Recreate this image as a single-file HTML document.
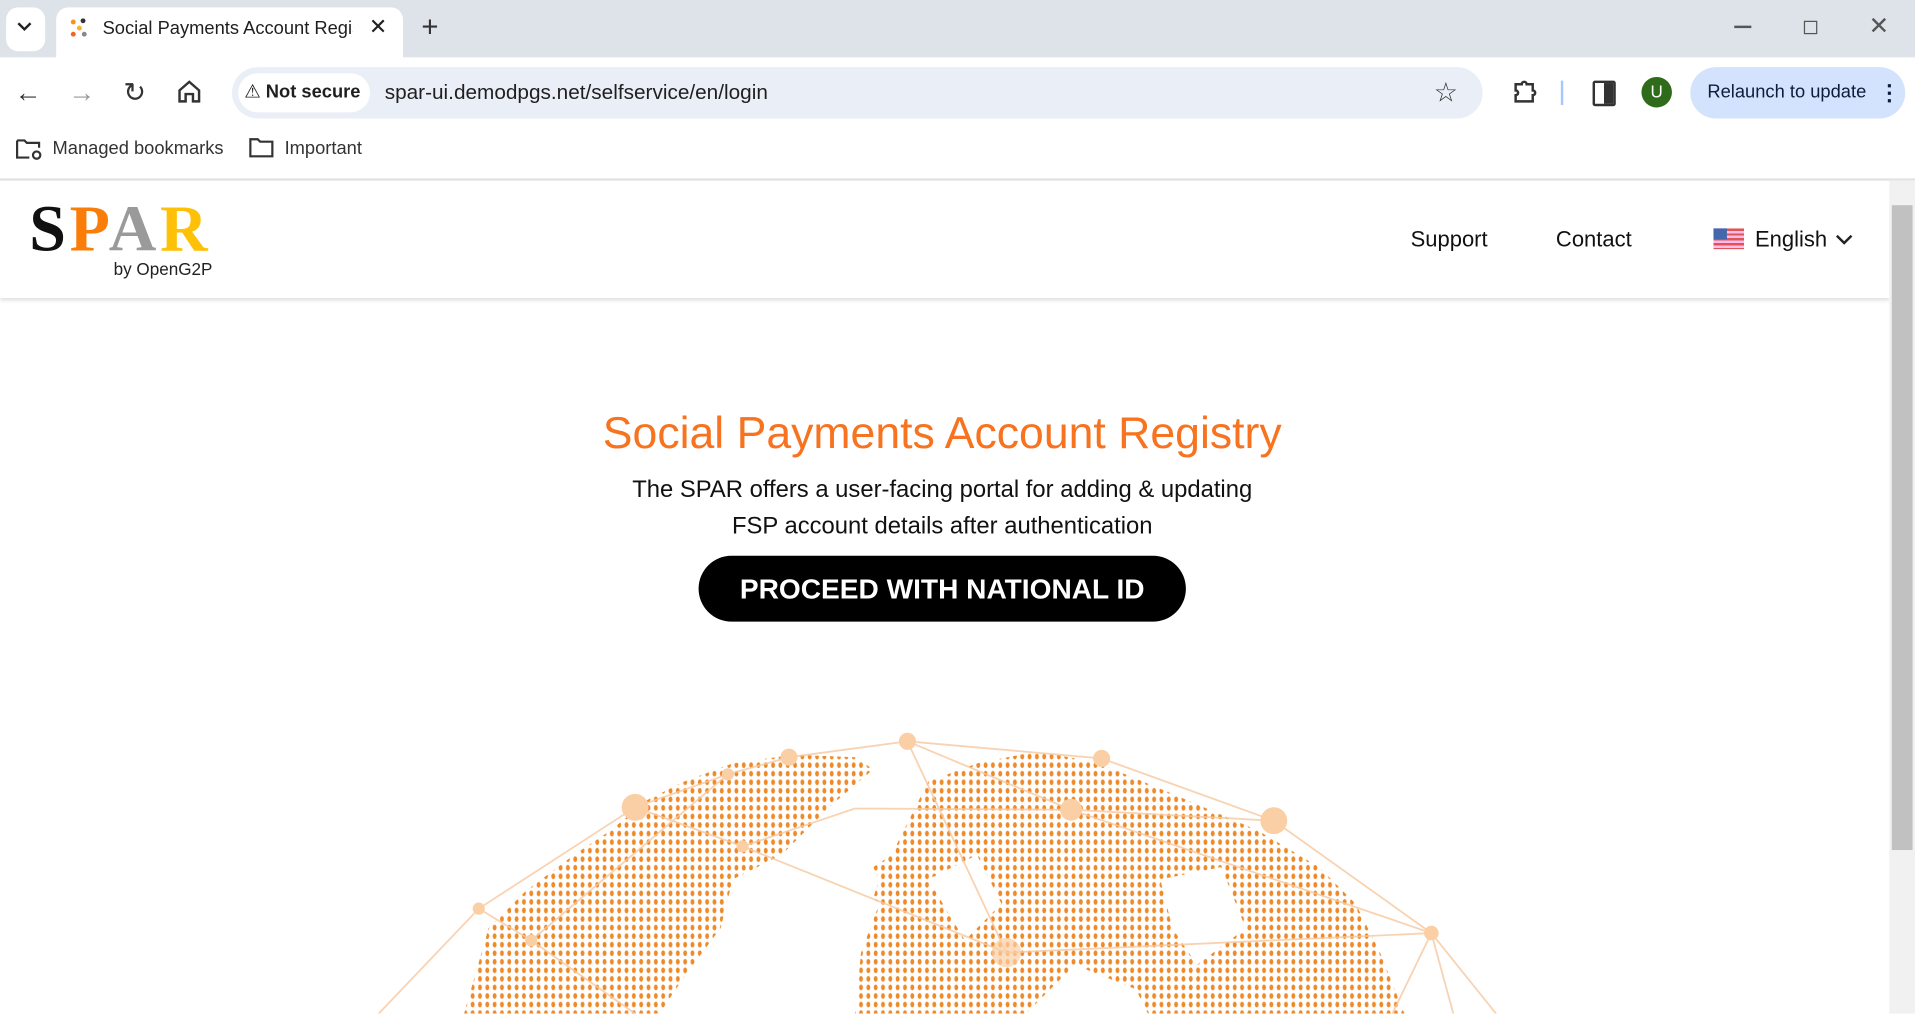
<!DOCTYPE html>
<html><head><meta charset="utf-8"><style>
html,body{margin:0;padding:0;width:1915px;height:1014px;overflow:hidden;background:#fff}
#w{width:1568px;height:830px;transform:scale(1.221301);transform-origin:0 0;position:relative;font-family:"Liberation Sans",sans-serif}
.a{position:absolute}
.tabbar{left:0;top:0;width:1568px;height:47px;background:#dee3ea}
.tb{left:0;top:47px;width:1568px;height:99px;background:#fff}
.url{left:190px;top:55px;width:1024px;height:42px;border-radius:21px;background:#e9eef7}
.ns{left:195px;top:60px;width:108px;height:32px;border-radius:16px;background:#fff;font-size:15px;font-weight:bold;color:#1f1f1f;line-height:32px}
.rl{left:1384px;top:55px;width:176px;height:42px;border-radius:21px;background:#d3e3fd;font-size:15px;color:#0b1d3a;line-height:42px}
.nav{font-family:"Liberation Sans",sans-serif;font-size:18px;color:#111}
</style></head><body><div id="w">
<div class="a tabbar"></div>
<div class="a" style="left:5px;top:6px;width:32px;height:36px;border-radius:10px;background:#fff"></div>
<svg class="a" style="left:13px;top:17px" width="14" height="10"><path d="M2 2l5 5 5-5" fill="none" stroke="#222" stroke-width="2"/></svg>
<div class="a" style="left:46px;top:6px;width:284px;height:45px;border-radius:10px 10px 0 0;background:#fff"></div>
<svg class="a" style="left:57px;top:15px" width="16" height="16"><circle cx="3" cy="3" r="2" fill="#f7941d"/><circle cx="11" cy="2" r="2" fill="#333"/><circle cx="8" cy="8" r="2" fill="#fbb034"/><circle cx="3" cy="13" r="2" fill="#f26522"/><circle cx="12" cy="13" r="2" fill="#888"/></svg>
<div class="a" style="left:84px;top:15px;font-size:15px;color:#1f1f1f;width:205px;overflow:hidden;white-space:nowrap">Social Payments Account Regist</div>
<div class="a" style="left:302px;top:12px;font-size:18px;color:#222">✕</div>
<div class="a" style="left:345px;top:9px;font-size:24px;color:#333">+</div>
<div class="a" style="left:1420px;top:21px;width:14px;height:1.5px;background:#555"></div>
<div class="a" style="left:1477px;top:17px;width:9px;height:9px;border:1.5px solid #555"></div>
<div class="a" style="left:1530px;top:9px;font-size:20px;color:#555">✕</div>
<div class="a tb"></div>
<div class="a" style="left:12px;top:63px;font-size:22px;color:#333">←</div>
<div class="a" style="left:56px;top:63px;font-size:22px;color:#999">→</div>
<div class="a" style="left:101px;top:63px;font-size:22px;color:#333">↻</div>
<svg class="a" style="left:145px;top:65px" width="20" height="20"><path d="M2 9L10 2l8 7v9h-5v-6h-6v6H2z" fill="none" stroke="#333" stroke-width="2"/></svg>
<div class="a url"></div>
<div class="a ns"><span style="margin-left:5px;font-weight:normal">⚠</span> Not secure</div>
<div class="a" style="left:315px;top:66px;font-size:17px;color:#1f1f1f">spar-ui.demodpgs.net/selfservice/en/login</div>
<div class="a" style="left:1174px;top:63px;font-size:22px;color:#333">☆</div>
<svg class="a" style="left:1237px;top:64px" width="22" height="22"><path d="M4 5h5a2 2 0 0 1 4 0h5v5a2 2 0 0 1 0 4v5H4v-5a2 2 0 0 0 0-4z" fill="none" stroke="#333" stroke-width="2"/></svg>
<div class="a" style="left:1278px;top:66px;width:2px;height:20px;background:#a8c7fa"></div>
<div class="a" style="left:1304px;top:66px;width:15px;height:17px;border:2px solid #333;border-radius:2px;background:linear-gradient(90deg,#fff 50%,#333 50%)"></div>
<div class="a" style="left:1344px;top:63px;width:25px;height:25px;border-radius:50%;background:#2e6b1a;color:#fff;font-size:14px;text-align:center;line-height:25px">U</div>
<div class="a rl"><span style="margin-left:14px">Relaunch to update</span><span style="position:absolute;left:154px;font-weight:bold;font-size:18px">⋮</span></div>
<svg class="a" style="left:12px;top:112px" width="24" height="20"><path d="M2 3h6l2 2h10v4M2 3v14h10" fill="none" stroke="#333" stroke-width="1.8"/><circle cx="18" cy="15" r="3" fill="none" stroke="#333" stroke-width="1.8"/></svg>
<div class="a" style="left:43px;top:113px;font-size:15px;color:#333">Managed bookmarks</div>
<svg class="a" style="left:203px;top:112px" width="22" height="18"><path d="M2 2h6l2 2h10v12H2z" fill="none" stroke="#333" stroke-width="1.8"/></svg>
<div class="a" style="left:233px;top:113px;font-size:15px;color:#333">Important</div>
<div class="a" style="left:0;top:146px;width:1568px;height:2px;background:#e3e3e3"></div>
<div class="a" style="left:0;top:148px;width:1547px;height:96px;background:#fff;box-shadow:0 2px 3px rgba(0,0,0,.12)"></div>
<div class="a" style="left:24px;top:162px;font-family:'Liberation Serif',serif;font-size:54px;font-weight:bold;letter-spacing:3px;line-height:50px"><span style="color:#111">S</span><span style="color:#fa7d09">P</span><span style="color:#9a9a9a">A</span><span style="color:#ffc107">R</span></div>
<div class="a" style="left:93px;top:212px;font-size:14px;color:#222">by OpenG2P</div>
<div class="a nav" style="left:1155px;top:186px">Support</div>
<div class="a nav" style="left:1274px;top:186px">Contact</div>
<div class="a" style="left:1403px;top:187px;width:25px;height:17px;background:repeating-linear-gradient(#d55 0 2px,#fbe 2px 4px)"></div>
<div class="a" style="left:1403px;top:187px;width:11px;height:9px;background:#46a"></div>
<div class="a nav" style="left:1437px;top:186px">English</div>
<svg class="a" style="left:1502px;top:190px" width="16" height="12"><path d="M2 3l6 6 6-6" fill="none" stroke="#222" stroke-width="2"/></svg>
<div class="a" style="left:1547px;top:148px;width:21px;height:682px;background:#f1f1f1"></div>
<div class="a" style="left:1549px;top:168px;width:17px;height:528px;background:#c1c1c1"></div>
<div class="a" style="left:0;top:334px;width:1543px;text-align:center;font-size:36.5px;color:#f7731f">Social Payments Account Registry</div>
<div class="a" style="left:0;top:386px;width:1543px;text-align:center;font-size:19.5px;color:#111;line-height:30px">The SPAR offers a user-facing portal for adding &amp; updating<br>FSP account details after authentication</div>
<div class="a" style="left:572px;top:455px;width:399px;height:54px;border-radius:27px;background:#000;color:#fff;font-size:23px;font-weight:bold;text-align:center;line-height:54px">PROCEED WITH NATIONAL ID</div>
<svg class="a" style="left:300px;top:590px" width="940" height="240" viewBox="300 590 940 240">
<defs><pattern id="d" width="6" height="7" patternUnits="userSpaceOnUse"><ellipse cx="3" cy="3.5" rx="1.6" ry="2.3" fill="#ee8a2a"/></pattern></defs>
<g fill="url(#d)">
<path d="M380 830L400 760 430 730 470 700 500 680 530 655 560 640 600 625 650 618 700 620 715 630 680 660 640 700 600 720 590 760 560 800 540 830z"/>
<path d="M700 830L705 780 720 740 700 720 730 700 750 660 760 640 800 625 850 615 900 625 960 650 1030 680 1080 710 1110 740 1130 780 1150 830z"/>
</g>
<g fill="#fff"><path d="M600 760L640 700 700 680 720 720 700 780 680 830 620 830z"/><path d="M760 720L800 700 820 740 790 770z"/><path d="M950 720L1000 710 1020 760 980 790 960 760z"/><path d="M840 830L880 790 930 810 940 830z"/></g>
<g stroke="#f7c9a0" stroke-width="1.5" fill="none" opacity=".8">
<path d="M310 830L392 744 520 661 596 634 646 620 743 607 902 621 1043 672 1172 764 1225 830"/>
<path d="M520 661L608 693 700 662 877 663 1043 672M743 607L824 780M743 607L877 663 1172 764M596 634L435 770 392 744M608 693L824 780 1172 764M1172 764L1140 830M1172 764L1190 830M435 770L520 830"/>
</g>
<g fill="#fbcfa5"><circle cx="743" cy="607" r="7"/><circle cx="646" cy="620" r="7"/><circle cx="902" cy="621" r="7"/><circle cx="596" cy="634" r="5"/><circle cx="520" cy="661" r="11"/><circle cx="1043" cy="672" r="11"/><circle cx="877" cy="663" r="9"/><circle cx="1172" cy="764" r="6"/><circle cx="392" cy="744" r="5"/><circle cx="435" cy="770" r="5"/><circle cx="824" cy="780" r="12" opacity=".7"/><circle cx="608" cy="693" r="5"/></g>
</svg>
</div></body></html>
